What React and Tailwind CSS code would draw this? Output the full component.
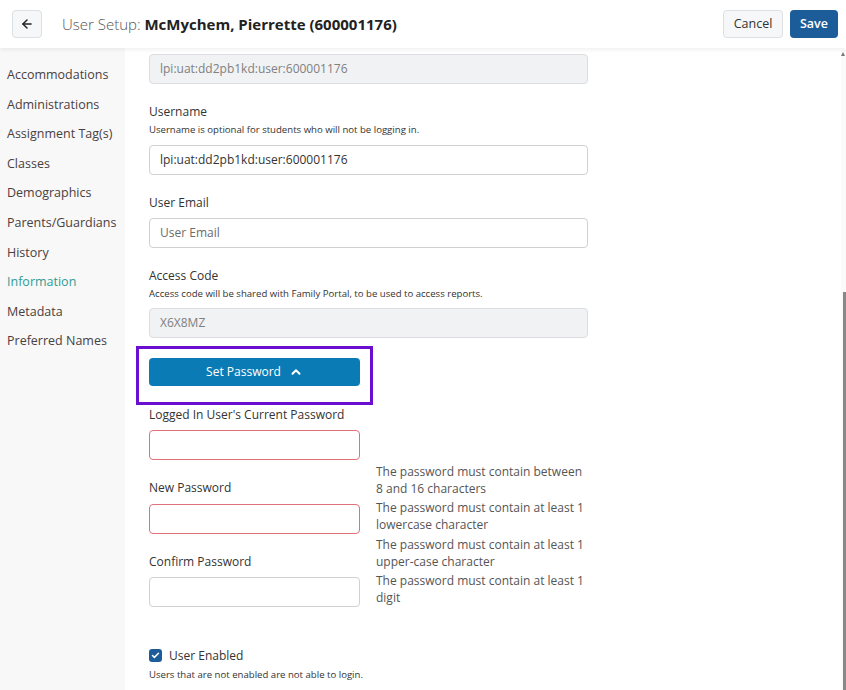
import { ArrowLeft, ChevronUp, Check } from "lucide-react";

const navItems = [
  "Accommodations",
  "Administrations",
  "Assignment Tag(s)",
  "Classes",
  "Demographics",
  "Parents/Guardians",
  "History",
  "Information",
  "Metadata",
  "Preferred Names",
];

const rules = [
  ["The password must contain between", "8 and 16 characters"],
  ["The password must contain at least 1", "lowercase character"],
  ["The password must contain at least 1", "upper-case character"],
  ["The password must contain at least 1", "digit"],
];

const Field = ({ value, disabled, placeholder, className = "" }) => (
  <div
    className={`h-[30px] rounded border px-[10px] flex items-center text-[12px] ${
      disabled ? "bg-[#f1f2f4] border-[#dcdde0] text-[#808080]" : "bg-white border-[#cfd1d4] text-[#333]"
    } ${className}`}
  >
    {value ? value : <span className="text-[#6b6b6b]">{placeholder}</span>}
  </div>
);

export default function App() {
  return (
    <div className="relative w-[846px] h-[690px] overflow-hidden bg-white flex flex-col font-['Open_Sans',sans-serif] text-[#333]">
      {/* header */}
      <header className="relative z-10 h-12 shrink-0 flex items-center pl-3 pr-2 bg-white shadow-[0_2px_4px_rgba(0,0,0,0.06)]">
        <button className="w-[30px] h-[28px] rounded border border-[#dcdfe3] bg-[#f6f7f9] flex items-center justify-center">
          <ArrowLeft size={14} strokeWidth={2.5} className="text-[#222]" />
        </button>
        <h1 className="ml-5 text-[15px] text-[#555] font-light">
          User Setup: <span className="font-bold text-[#222]">McMychem, Pierrette (600001176)</span>
        </h1>
        <div className="ml-auto flex gap-[7px]">
          <button className="h-[28px] w-[60px] rounded border border-[#dcdfe3] bg-[#f6f7f9] text-[12.5px] text-[#333]">
            Cancel
          </button>
          <button className="h-[28px] w-[48px] rounded bg-[#1c5d99] text-[12.5px] font-semibold text-white">
            Save
          </button>
        </div>
      </header>

      <div className="flex flex-1 min-h-0">
        {/* sidebar */}
        <nav className="w-[125px] shrink-0 bg-[#f8f8f8] pt-[12px] pl-[7px] flex flex-col">
          {navItems.map((item) => (
            <div
              key={item}
              className={`h-[29.6px] leading-[29.6px] text-[12.5px] ${
                item === "Information" ? "text-[#2e9c94]" : "text-[#4a4040]"
              }`}
            >
              {item}
            </div>
          ))}
        </nav>

        {/* main form */}
        <main className="flex-1 pl-6 pt-[6px]">
          <div className="w-[439px]">
            <Field disabled value="lpi:uat:dd2pb1kd:user:600001176" />

            <div className="mt-[18px] leading-5 text-[12px]">Username</div>
            <div className="leading-4 text-[9.6px] text-[#333]">Username is optional for students who will not be logging in.</div>
            <Field value="lpi:uat:dd2pb1kd:user:600001176" className="mt-[7px]" />

            <div className="mt-[18px] leading-5 text-[12px]">User Email</div>
            <Field placeholder="User Email" className="mt-[5px]" />

            <div className="mt-[18px] leading-5 text-[12px]">Access Code</div>
            <div className="leading-4 text-[9.6px] text-[#333]">
              Access code will be shared with Family Portal, to be used to access reports.
            </div>
            <Field disabled value="X6X8MZ" className="mt-[6px]" />
          </div>

          <div className="mt-[8px] -ml-[13px] w-[237px] border-[3px] border-[#6a0fcf] pt-[9px] pb-[16px] px-[10px]">
            <button className="w-[211px] h-[28px] rounded bg-[#0b7bb5] text-white text-[12px] font-medium flex items-center justify-center gap-2">
              Set Password
              <ChevronUp size={14} strokeWidth={3.5} />
            </button>
          </div>

          <div className="leading-5 text-[12px]">Logged In User's Current Password</div>
          <div className="mt-[5px] w-[211px] h-[30px] rounded border border-[#e0717b] bg-white" />

          <div className="flex gap-4">
            <div className="w-[211px] pt-[18px]">
              <div className="leading-5 text-[12px]">New Password</div>
              <div className="mt-[6px] h-[30px] rounded border border-[#e0717b] bg-white" />
              <div className="mt-[18px] leading-5 text-[12px]">Confirm Password</div>
              <div className="mt-[5px] h-[30px] rounded border border-[#cfd1d4] bg-white" />
            </div>
            <div className="pt-[4px] whitespace-nowrap">
              {rules.map(([a, b]) => (
                <div key={a + b} className="mb-[3px] text-[12px] leading-[16.7px] text-[#555]">
                  <div>{a}</div>
                  <div>{b}</div>
                </div>
              ))}
            </div>
          </div>

          <div className="mt-[36px] flex items-center gap-[7px] leading-5">
            <span className="w-[13px] h-[13px] rounded-[3px] bg-[#1c5d99] flex items-center justify-center">
              <Check size={9} strokeWidth={4} className="text-white" />
            </span>
            <span className="text-[12px]">User Enabled</span>
          </div>
          <div className="mt-[1px] leading-4 text-[9.6px] text-[#333]">Users that are not enabled are not able to login.</div>
        </main>
      </div>

      {/* scrollbar */}
      <div className="absolute right-0 top-[50px] bottom-0 w-[5px] bg-[#fafafa]" />
      <div className="absolute right-[1px] top-[52px] w-0 h-0 border-l-[2px] border-r-[2px] border-b-[4px] border-l-transparent border-r-transparent border-b-[#777]" />
      <div className="absolute right-0 top-[292px] bottom-0 w-[3px] bg-[#888]" />
    </div>
  );
}
